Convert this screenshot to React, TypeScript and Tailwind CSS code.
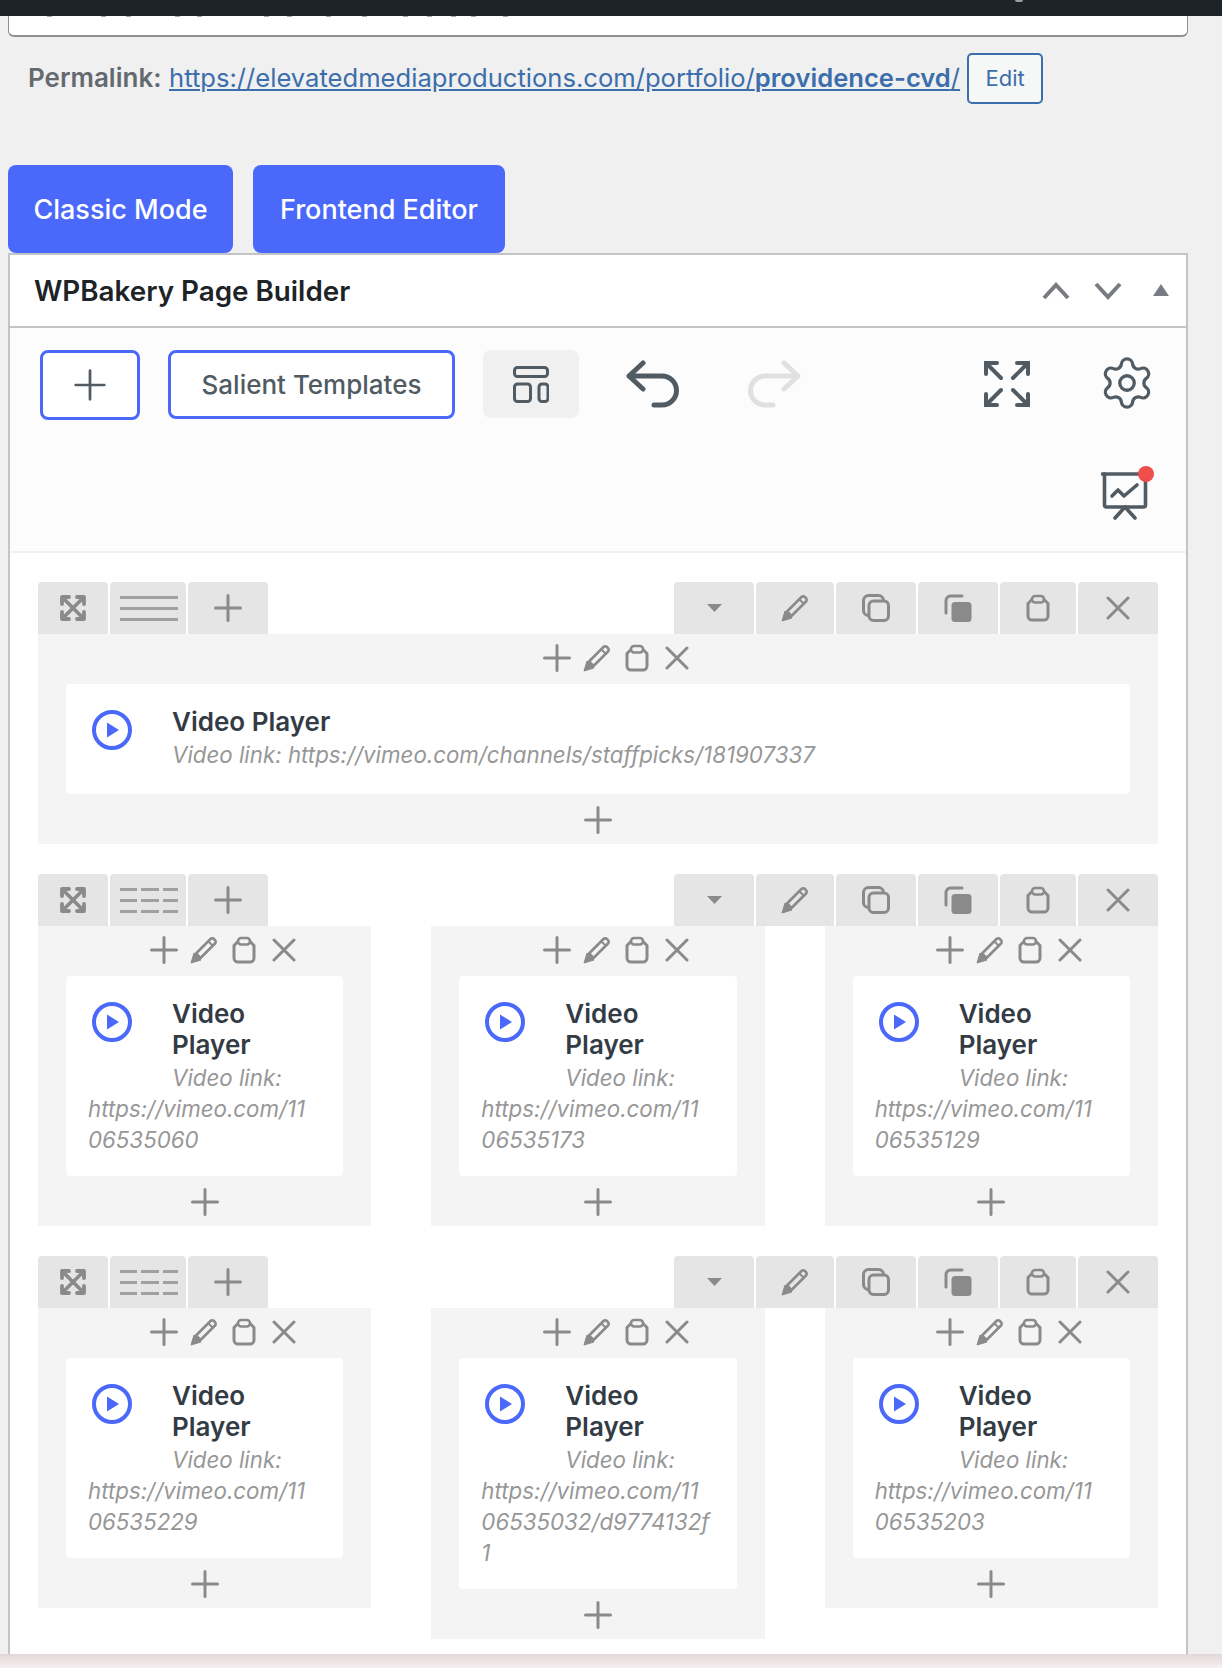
import React from 'react'
import { Settings } from 'lucide-react'

const GRAY = '#8a8a8a'
const SLATE = '#515b63'
const TAB = '#e5e5e5'

function Plus({ size = 28, color = GRAY, width = 3 }: { size?: number, color?: string, width?: number }) {
    return (
        <svg width={size} height={size} viewBox="0 0 28 28" fill="none" stroke={color} strokeWidth={width} strokeLinecap="round">
            <path d="M1.5 14h25M14 1.5v25" />
        </svg>
    )
}

function Cross() {
    return (
        <svg width="24" height="24" viewBox="0 0 24 24" fill="none" stroke={GRAY} strokeWidth="3" strokeLinecap="round">
            <path d="M2 2l20 20M22 2L2 22" />
        </svg>
    )
}

function Pencil() {
    return (
        <svg width="28" height="28" viewBox="0 0 28 28" fill="none" stroke={GRAY} strokeWidth="2.6" strokeLinejoin="round">
            <path d="M6 17.5L20.5 3a2.4 2.4 0 0 1 3.4 0l1.1 1.1a2.4 2.4 0 0 1 0 3.4L10.5 22z" />
            <path d="M1 27l3-10 7 7z" fill={GRAY} strokeWidth="1" />
            <path d="M18.5 5.5l4 4" strokeWidth="2" />
        </svg>
    )
}

function Paste() {
    return (
        <svg width="24" height="28" viewBox="0 0 24 28" fill="none" stroke={GRAY} strokeWidth="3" strokeLinejoin="round">
            <path d="M6 5.5L2 9.5V22a4 4 0 0 0 4 4h12a4 4 0 0 0 4-4V9.5l-4-4" />
            <rect x="6" y="2" width="12" height="6.5" rx="3.2" strokeWidth="2.6" />
        </svg>
    )
}

function Copy() {
    return (
        <svg width="28" height="28" viewBox="0 0 28 28" fill="none" stroke={GRAY} strokeWidth="3">
            <rect x="1.5" y="1.5" width="20" height="20" rx="5" />
            <rect x="7" y="7" width="19.5" height="19.5" rx="4.5" fill={TAB} />
        </svg>
    )
}

function CopyFilled() {
    return (
        <svg width="28" height="28" viewBox="0 0 28 28" fill="none">
            <path d="M2 19V6.5A4.5 4.5 0 0 1 6.500 2H18" stroke={GRAY} strokeWidth="3" strokeLinecap="round" />
            <rect x="7.500" y="8" width="20" height="20" rx="3.500" fill={GRAY} />
        </svg>
    )
}

function Arrows() {
    return (
        <svg width="26" height="26" viewBox="0 0 26 26" fill="none" stroke={GRAY} strokeLinecap="round" strokeLinejoin="round">
            <path d="M4 4l18 18M22 4L4 22" strokeWidth="3.600" />
            <path d="M2 9V2h7M24 9V2h-7M2 17v7h7M24 17v7h-7" strokeWidth="3.800" />
        </svg>
    )
}

function Caret() {
    return (
        <svg width="15" height="8" viewBox="0 0 15 8" fill={GRAY}>
            <path d="M0 0h15L7.500 8z" />
        </svg>
    )
}

function Lines({ triple }: { triple?: boolean }) {
    const rows = [2.500, 13.500, 24.500]
    return (
        <svg width="58" height="27" viewBox="0 0 58 27" stroke="#a0a0a0" strokeWidth="3" className="ml-[2px]">
            {rows.map(y => triple
                ? <path key={y} d={`M0 ${y}h17M21 ${y}h18M43 ${y}h15`} />
                : <path key={y} d={`M0 ${y}h58`} />)}
        </svg>
    )
}

function Tab({ width, children }: { width: string, children: React.ReactNode }) {
    return <div className={`${width} h-[52px] bg-[#e5e5e5] rounded-t-[4px] flex items-center justify-center`}>{children}</div>
}

function PlayIcon() {
    return (
        <svg width="40" height="40" viewBox="0 0 40 40" className="ml-[4px] mt-[4px]">
            <circle cx="20" cy="20" r="18" fill="none" stroke="#4a69fa" strokeWidth="4" />
            <path d="M15 12.500l12 7.500-12 7.500z" fill="#4a69fa" />
        </svg>
    )
}

function VideoCard({ link }: { link: string }) {
    return (
        <div className="bg-white rounded-[4px] pt-[22px] pb-[21px] pl-[22px] pr-[25px] flow-root">
            <div className="float-left w-[84px] h-[67px]"><PlayIcon /></div>
            <div className="text-[26px] leading-[31px] font-semibold text-[#333b45] mb-[2px]">Video Player</div>
            <div className="text-[22.300px] leading-[31px] italic text-[#979797] [overflow-wrap:anywhere]">Video link: {link}</div>
        </div>
    )
}

function Column({ link }: { link: string }) {
    return (
        <div className="bg-[#f4f4f4] px-[28px]">
            <div className="h-[50px] pl-[38px] pb-[2px] flex items-center justify-center">
                <div className="w-[40px] flex justify-center"><Plus /></div>
                <div className="w-[40px] flex justify-center"><Pencil /></div>
                <div className="w-[40px] flex justify-center"><Paste /></div>
                <div className="w-[40px] flex justify-center"><Cross /></div>
            </div>
            <VideoCard link={link} />
            <div className="h-[50px] pt-[1px] flex items-center justify-center"><Plus /></div>
        </div>
    )
}

function BuilderRow({ links }: { links: string[] }) {
    return (
        <div className="mb-[30px]">
            <div className="flex justify-between">
                <div className="flex gap-[2px]">
                    <Tab width="w-[70px]"><Arrows /></Tab>
                    <Tab width="w-[76px]"><Lines triple={links.length > 1} /></Tab>
                    <Tab width="w-[80px]"><Plus /></Tab>
                </div>
                <div className="flex gap-[2px]">
                    <Tab width="w-[80px]"><Caret /></Tab>
                    <Tab width="w-[78px]"><Pencil /></Tab>
                    <Tab width="w-[80px]"><Copy /></Tab>
                    <Tab width="w-[80px]"><CopyFilled /></Tab>
                    <Tab width="w-[76px]"><Paste /></Tab>
                    <Tab width="w-[80px]"><Cross /></Tab>
                </div>
            </div>
            {links.length === 1
                ? <Column link={links[0]} />
                : (
                    <div className="grid grid-cols-3 gap-[60px] items-start">
                        {links.map(link => <Column key={link} link={link} />)}
                    </div>
                )}
        </div>
    )
}

function Undo({ color, flip }: { color: string, flip?: boolean }) {
    return (
        <svg width="55" height="48" viewBox="0 0 55 48" fill="none" stroke={color} strokeWidth="5" strokeLinecap="round" strokeLinejoin="round" className={flip ? '-scale-x-100' : ''}>
            <path d="M17 3L3 16l14 13M3 16h33a14.500 14.500 0 0 1 0 29h-8" />
        </svg>
    )
}

function Expand() {
    return (
        <svg width="46" height="46" viewBox="0 0 46 46" fill="none" stroke={SLATE} strokeWidth="4" strokeLinecap="round">
            <path d="M2 13V2h11M3 3l14 14M33 2h11v11M43 3L29 17M2 33v11h11M3 43l14-14M44 33v11H33M43 43L29 29" />
        </svg>
    )
}

function Chart() {
    return (
        <svg width="54" height="56" viewBox="0 0 54 56" fill="none" stroke={SLATE} strokeWidth="3.600" strokeLinecap="round" strokeLinejoin="round">
            <path d="M1.500 9h44" />
            <path d="M3.500 9v31a2 2 0 0 0 2 2h37a2 2 0 0 0 2-2V9" />
            <path d="M11 31l6-6 6 6 13-11" />
            <path d="M14 53l10-11 10 11" />
            <circle cx="45" cy="9" r="8" fill="#ef4f4c" stroke="none" />
        </svg>
    )
}

export default function App() {
    const ticks = [38, 92, 117, 166, 188, 255, 278, 317, 353, 394, 418, 442, 462, 494]

    return (
        <div className="w-[1222px] h-[1668px] overflow-hidden bg-[#f0f0f1] [font-family:Inter,'Liberation_Sans',sans-serif]">
            <div className="h-[16px] bg-[#1d2327] relative">
                <div className="absolute left-[1015px] top-0 w-[8px] h-[2px] bg-[#9a9ea2] rounded-b-full"></div>
            </div>
            <div className="relative ml-[8px] w-[1180px] h-[21px] bg-white border-x border-b-2 border-[#8c8f94] rounded-b-[6px]">
                {ticks.map(x => <div key={x} className="absolute top-0 w-[5px] h-[1px] bg-[#a8a8a8]" style={{ left: x }}></div>)}
            </div>

            <div className="mt-[16px] ml-[28px] h-[51px] flex items-center gap-[7px]">
                <div className="text-[26px] pb-[2px] font-semibold text-[#646970]">
                    Permalink: <a className="text-[25.600px] ml-[1px] font-normal text-[#3b6eaa] underline">https://elevatedmediaproductions.com/portfolio/<b className="font-semibold">providence-cvd</b>/</a>
                </div>
                <div className="w-[76px] h-[51px] border-2 border-[#3b6eaa] rounded-[5px] bg-[#f6f7f7] text-[#3b6eaa] text-[22px] flex items-center justify-center">Edit</div>
            </div>

            <div className="mt-[61px] ml-[8px] flex gap-[20px] text-[27px] font-medium text-white">
                <div className="w-[225px] h-[88px] pt-[2px] bg-[#4a69fa] rounded-[8px] flex items-center justify-center">Classic Mode</div>
                <div className="w-[252px] h-[88px] pt-[2px] bg-[#4a69fa] rounded-[8px] flex items-center justify-center">Frontend Editor</div>
            </div>

            <div className="ml-[8px] w-[1180px] h-[1401px] border-x-2 border-t-2 border-[#c3c4c7] bg-white">
                <div className="h-[73px] px-[24px] flex items-center justify-between border-b-2 border-[#c3c4c7]">
                    <div className="text-[27.800px] pt-[2px] font-semibold text-[#1d2327]">WPBakery Page Builder</div>
                    <div className="flex items-center">
                        <svg width="28" height="18" viewBox="0 0 28 18" fill="none" stroke="#787c82" strokeWidth="4"><path d="M2 16L14 3l12 13" /></svg>
                        <svg width="28" height="18" viewBox="0 0 28 18" fill="none" stroke="#787c82" strokeWidth="4" className="ml-[24px]"><path d="M2 2l12 13L26 2" /></svg>
                        <svg width="16" height="12" viewBox="0 0 16 12" fill="#787c82" className="ml-[31px] mr-[-7px] mb-[2px]"><path d="M8 0l8 12H0z" /></svg>
                    </div>
                </div>

                <div className="h-[225px] bg-[#fcfcfc] border-b-2 border-[#f0f0f1] pt-[22px] pl-[30px] pr-[36px]">
                    <div className="flex items-start">
                        <div className="shrink-0 w-[100px] h-[70px] border-[3px] border-[#4a69fa] rounded-[8px] bg-white flex items-center justify-center">
                            <Plus size={32} color={SLATE} width={2.400} />
                        </div>
                        <div className="shrink-0 ml-[28px] w-[287px] h-[69px] border-[3px] border-[#4a69fa] rounded-[8px] bg-white flex items-center justify-center text-[26px] font-medium text-[#515b63]">
                            Salient Templates
                        </div>
                        <div className="shrink-0 ml-[28px] w-[96px] h-[68px] rounded-[8px] bg-[#f0f0f1] flex items-center justify-center">
                            <svg width="36" height="37" viewBox="0 0 36 37" fill="none" stroke={SLATE} strokeWidth="3">
                                <rect x="1.500" y="1.500" width="33" height="9" rx="3" />
                                <rect x="1.500" y="18" width="16" height="17.500" rx="3" />
                                <rect x="26" y="18" width="9" height="17.500" rx="3" />
                            </svg>
                        </div>
                        <div className="ml-[47px] mt-[10px]"><Undo color={SLATE} /></div>
                        <div className="ml-[65px] mt-[10px]"><Undo color="#dfe0e2" flip /></div>
                        <div className="ml-[183px] mt-[11px]"><Expand /></div>
                        <div className="ml-[68px] mt-[4px] mr-[-5px]"><Settings size={58} color={SLATE} strokeWidth={1.350} /></div>
                    </div>
                    <div className="flex justify-end mt-[45px] mr-[-5px]"><Chart /></div>
                </div>

                <div className="pt-[29px] px-[28px]">
                    <BuilderRow links={['https://vimeo.com/channels/staffpicks/181907337']} />
                    <BuilderRow links={['https://vimeo.com/1106535060', 'https://vimeo.com/1106535173', 'https://vimeo.com/1106535129']} />
                    <BuilderRow links={['https://vimeo.com/1106535229', 'https://vimeo.com/1106535032/d9774132f1', 'https://vimeo.com/1106535203']} />
                </div>
            </div>

            <div className="h-[14px] bg-linear-to-b from-[#e2d8da] to-[#f8eff1]"></div>
        </div>
    )
}
